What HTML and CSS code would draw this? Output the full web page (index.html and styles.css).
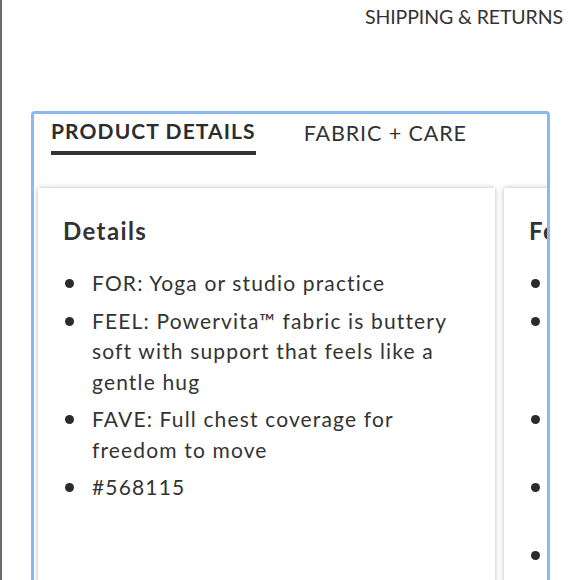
FILE: index.html
```html
<!DOCTYPE html>
<html lang="en">
<head>
<meta charset="utf-8">
<title>Product details</title>
<link rel="stylesheet" href="styles.css">
</head>
<body>
<div class="page">
  <header class="top">
    <a class="ship-link">SHIPPING &amp; RETURNS</a>
  </header>
  <section class="panel">
    <nav class="tabs">
      <span class="tab tab-active">PRODUCT DETAILS</span>
      <span class="tab">FABRIC + CARE</span>
    </nav>
    <div class="cards">
      <article class="card">
        <h2 class="card-title">Details</h2>
        <ul class="bullets">
          <li>FOR: Yoga or studio practice</li>
          <li>FEEL: Powervita™ fabric is buttery soft with support that feels like a gentle hug</li>
          <li>FAVE: Full chest coverage for freedom to move</li>
          <li>#568115</li>
        </ul>
      </article>
      <article class="card">
        <h2 class="card-title">Features</h2>
        <ul class="bullets">
          <li>Light support, A/B cup</li>
          <li>Designed with a wide band and a smooth, second-skin fit that stays put while you flow</li>
          <li>Removable cups for shape and coverage</li>
          <li>Racerback straps for a full range of motion</li>
          <li>Pull-on design</li>
        </ul>
      </article>
    </div>
  </section>
</div>
</body>
</html>
```
FILE: styles.css
```css
* { box-sizing: border-box; }
html, body {
  margin: 0;
  padding: 0;
  background: #ffffff;
}
body {
  font-family: "Lato", "Open Sans", sans-serif;
  color: #333333;
}
.page {
  border-left: 2px solid #6c6c6c;
  height: 580px;
  overflow: hidden;
}
.top {
  display: flex;
  justify-content: flex-end;
  padding: 5px 17px 0 0;
  height: 111px;
}
.ship-link {
  font-size: 19.5px;
  line-height: 24px;
  color: #333333;
  font-weight: 400;
  letter-spacing: -0.1px;
}
.panel {
  margin-left: 29px;
  width: 519px;
  border: 3px solid #8bb9ef;
  border-bottom: none;
  border-radius: 4px 4px 0 0;
  height: 480px;
  overflow: hidden;
}
.tabs {
  display: flex;
  gap: 48px;
  padding: 4px 0 0 17px;
  height: 74px;
}
.tab {
  font-size: 21.5px;
  line-height: 26px;
  color: #333333;
  letter-spacing: 0.9px;
  padding-top: 2px;
}
.tab-active {
  font-weight: 700;
  color: #2d2d2d;
  align-self: flex-start;
  padding-top: 0;
  font-size: 21px;
  letter-spacing: 1.1px;
  padding-bottom: 7px;
  border-bottom: 4px solid #333333;
}
.cards {
  display: flex;
  gap: 9px;
  padding: 0 0 0 4px;
}
.card {
  flex: 0 0 457px;
  background: #ffffff;
  box-shadow: 0 0 5px rgba(0, 0, 0, 0.28);
  padding: 28px 28px 40px 25px;
  min-height: 420px;
}
.card-title {
  margin: 0 0 22px 0;
  font-size: 24px;
  line-height: 30px;
  font-weight: 700;
  letter-spacing: 1.4px;
  color: #333333;
}
.bullets {
  list-style: none;
  margin: 0;
  padding: 0;
}
.bullets li {
  position: relative;
  padding-left: 29px;
  font-size: 21px;
  line-height: 30.5px;
  margin-bottom: 7px;
  letter-spacing: 1.15px;
  color: #333333;
}
.bullets li::before {
  content: "";
  position: absolute;
  left: 2px;
  top: 11px;
  width: 9px;
  height: 9px;
  border-radius: 50%;
  background: #2b2b2b;
}
```
